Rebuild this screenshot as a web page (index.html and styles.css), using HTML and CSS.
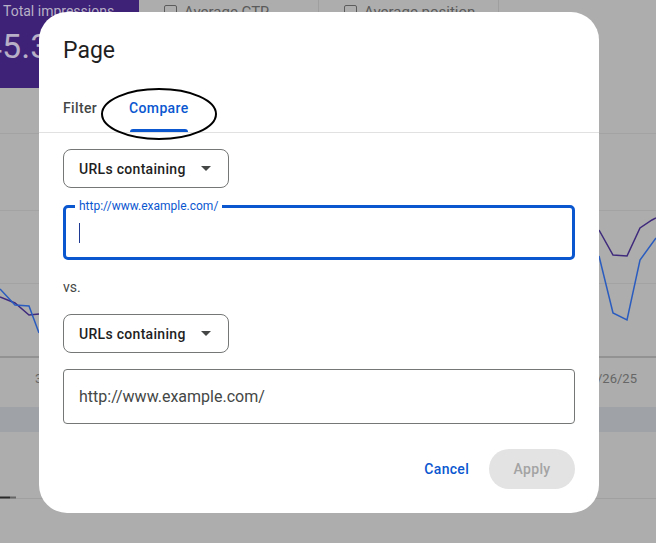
FILE: index.html
```html
<!DOCTYPE html>
<html>
<head>
<meta charset="utf-8">
<link rel="stylesheet" href="styles.css">
</head>
<body>
<div class="page">
  <div class="cards">
    <div class="card card-primary">
      <div class="card-label">Total impressions</div>
      <div class="card-value">45.3K</div>
    </div>
    <div class="card card-metric">
      <span class="checkbox"></span><span class="metric-label">Average CTR</span>
    </div>
    <div class="card card-metric">
      <span class="checkbox"></span><span class="metric-label">Average position</span>
    </div>
    <div class="card card-rest"></div>
  </div>
  <svg class="chart" width="656" height="455" viewBox="0 0 656 455">
    <line x1="0" y1="45.5" x2="656" y2="45.5" stroke="#a3a3a3" stroke-width="1"/>
    <line x1="0" y1="122.5" x2="656" y2="122.5" stroke="#a3a3a3" stroke-width="1"/>
    <line x1="0" y1="195.5" x2="656" y2="195.5" stroke="#a3a3a3" stroke-width="1"/>
    <line x1="0" y1="269" x2="656" y2="269" stroke="#8a8a8a" stroke-width="1.5"/>
    <polyline points="0,209 15,215 29,227 39,226" fill="none" stroke="#3f2a7c" stroke-width="1.5"/>
    <polyline points="0,201 15,217 29,218 39,245" fill="none" stroke="#2a5cbf" stroke-width="1.5"/>
    <polyline points="599,142 613,167 627,168 640,140 652,132 656,130" fill="none" stroke="#3f2a7c" stroke-width="1.5"/>
    <polyline points="599,168 613,225 627,232 640,172 656,150" fill="none" stroke="#2a5cbf" stroke-width="1.5"/>
    <text x="35" y="295" class="axis-label">3</text>
    <text x="597" y="295" class="axis-label">/26/25</text>
    <rect x="0" y="319" width="656" height="25" fill="#9fa2a6"/>
    <line x1="0" y1="410.5" x2="656" y2="410.5" stroke="#a0a0a0" stroke-width="1"/>
    <line x1="0" y1="409.5" x2="10" y2="409.5" stroke="#2a2a2a" stroke-width="2"/>
    <line x1="10" y1="409.5" x2="16" y2="409.5" stroke="#666666" stroke-width="2"/>
  </svg>
</div>

<div class="dialog">
  <h2 class="dialog-title">Page</h2>
  <div class="tabs">
    <div class="tab">Filter</div>
    <div class="tab tab-active">Compare</div>
  </div>
  <div class="dialog-body">
    <div class="select"><span>URLs containing</span><span class="arrow"></span></div>
    <div class="field field-focused">
      <span class="field-label">http://www.example.com/</span>
      <span class="cursor"></span>
    </div>
    <div class="vs">vs.</div>
    <div class="select select-second"><span>URLs containing</span><span class="arrow"></span></div>
    <div class="field field-plain">http://www.example.com/</div>
    <div class="actions">
      <button class="btn btn-text">Cancel</button>
      <button class="btn btn-filled" disabled>Apply</button>
    </div>
  </div>
</div>

<svg class="annotation" width="120" height="54" viewBox="0 0 120 54">
  <ellipse cx="59" cy="27" rx="57" ry="25" fill="none" stroke="#000" stroke-width="2"/>
</svg>
</body>
</html>
```

FILE: styles.css
```css
html, body {
  margin: 0;
  padding: 0;
}
body {
  width: 656px;
  height: 543px;
  overflow: hidden;
  background: #adadad;
  font-family: Roboto, "Liberation Sans", Arial, sans-serif;
  position: relative;
}

.page {
  width: 656px;
}
.cards {
  display: flex;
  height: 88px;
}
.card {
  box-sizing: border-box;
  height: 88px;
}
.card-primary {
  width: 139px;
  background: #3e2277;
  color: #b7b0c6;
  overflow: hidden;
  padding: 3px 0 0 3px;
}
.card-label {
  font-size: 14px;
  line-height: 16px;
  white-space: nowrap;
}
.card-value {
  font-size: 34px;
  line-height: 40px;
  margin-top: 7px;
  margin-left: -20px;
  white-space: nowrap;
}
.card-metric {
  width: 180px;
  border-right: 1px solid #9f9f9f;
  display: flex;
  align-items: flex-start;
  gap: 7px;
  padding: 5px 0 0 25px;
  color: #5a5a5a;
}
.card-rest {
  flex: 1;
}
.checkbox {
  width: 13px;
  height: 13px;
  box-sizing: border-box;
  border: 1.5px solid #5c5c5c;
  border-radius: 2px;
  flex: none;
}
.metric-label {
  font-size: 15px;
  line-height: 15px;
  white-space: nowrap;
}
.chart {
  display: block;
}
.axis-label {
  font-family: Roboto, "Liberation Sans", sans-serif;
  font-size: 13px;
  fill: #666666;
}

.dialog {
  position: absolute;
  left: 39px;
  top: 12px;
  width: 560px;
  height: 501px;
  background: #ffffff;
  border-radius: 28px;
  box-sizing: border-box;
}
.dialog-title {
  margin: 0;
  padding: 25px 24px 0;
  font-size: 23px;
  line-height: 28px;
  font-weight: 400;
  color: #1f1f1f;
}
.tabs {
  display: flex;
  align-items: flex-end;
  gap: 32px;
  height: 67px;
  padding: 0 24px;
  border-bottom: 1px solid #e1e1e1;
}
.tab {
  position: relative;
  font-size: 14px;
  line-height: 20px;
  font-weight: 500;
  letter-spacing: 0.35px;
  color: #444746;
  padding-bottom: 14px;
}
.tab-active {
  color: #0b57d0;
}
.tab-active::after {
  content: "";
  position: absolute;
  left: 1px;
  right: 1px;
  bottom: 0;
  height: 3px;
  background: #0b57d0;
  border-radius: 3px 3px 0 0;
}

.dialog-body {
  padding: 16px 24px 0;
}
.select {
  width: 166px;
  height: 39px;
  box-sizing: border-box;
  border: 1px solid #747775;
  border-radius: 8px;
  display: flex;
  align-items: center;
  justify-content: space-between;
  padding: 0 17px 0 15px;
  font-size: 14px;
  font-weight: 500;
  letter-spacing: 0.3px;
  color: #1f1f1f;
}
.arrow {
  width: 0;
  height: 0;
  border-left: 5px solid transparent;
  border-right: 5px solid transparent;
  border-top: 5px solid #444746;
}
.field {
  box-sizing: border-box;
  width: 512px;
  height: 55px;
  position: relative;
}
.field-focused {
  margin-top: 17px;
  border: 3px solid #0b57d0;
  border-radius: 5px;
}
.field-label {
  position: absolute;
  left: 9px;
  top: -9px;
  padding: 0 4px;
  background: #ffffff;
  font-size: 12px;
  line-height: 14px;
  color: #0b57d0;
}
.cursor {
  position: absolute;
  left: 13px;
  top: 15px;
  width: 1px;
  height: 20px;
  background: #1f3a93;
}
.vs {
  margin-top: 18px;
  font-size: 14px;
  line-height: 18px;
  color: #444746;
}
.select-second {
  margin-top: 18px;
}
.field-plain {
  margin-top: 16px;
  border: 1px solid #747775;
  border-radius: 4px;
  display: flex;
  align-items: center;
  padding-left: 15px;
  font-size: 16px;
  color: #444746;
}
.actions {
  display: flex;
  justify-content: flex-end;
  align-items: center;
  gap: 8px;
  margin-top: 25px;
  width: 512px;
}
.btn {
  font-family: Roboto, "Liberation Sans", Arial, sans-serif;
  font-size: 14px;
  font-weight: 500;
  letter-spacing: 0.3px;
  height: 40px;
  border: none;
  border-radius: 20px;
  background: transparent;
  padding: 0 12px;
}
.btn-text {
  color: #0b57d0;
}
.btn-filled {
  width: 86px;
  background: #e3e3e3;
  color: #a3a3a3;
  padding: 0;
}

.annotation {
  position: absolute;
  left: 100px;
  top: 87px;
}
```
